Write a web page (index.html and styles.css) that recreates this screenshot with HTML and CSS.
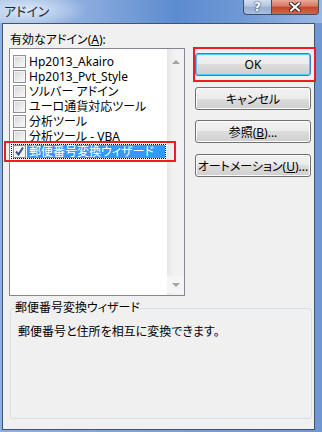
FILE: index.html
```html
<!DOCTYPE html>
<html lang="ja">
<head>
    <meta charset="UTF-8">
    <meta name="viewport" content="width=device-width, initial-scale=1.0">
    <title>アドイン</title>
    <link rel="stylesheet" href="styles.css">
</head>
<body>
    <div class="window">
        <div class="titlebar">
            <span class="title">アドイン</span>
            <div class="caption-buttons">
                <span class="cap-btn help">?</span>
                <span class="cap-btn close">
                    <svg width="12" height="10" viewBox="0 0 12 10">
                        <path d="M2 1.5 L10 8.5 M10 1.5 L2 8.5" stroke="#3a2a2a" stroke-width="4" stroke-linecap="square"/>
                        <path d="M2 1.5 L10 8.5 M10 1.5 L2 8.5" stroke="#ffffff" stroke-width="2" stroke-linecap="square"/>
                    </svg>
                </span>
            </div>
        </div>
        <div class="client">
            <div class="main">
                <div class="left">
                    <div class="label">有効なアドイン(<u>A</u>):</div>
                    <div class="listbox">
                        <ul class="items">
                            <li><span class="check"></span><span class="name">Hp2013_Akairo</span></li>
                            <li><span class="check"></span><span class="name">Hp2013_Pvt_Style</span></li>
                            <li><span class="check"></span><span class="name">ソルバー アドイン</span></li>
                            <li><span class="check"></span><span class="name">ユーロ通貨対応ツール</span></li>
                            <li><span class="check"></span><span class="name">分析ツール</span></li>
                            <li><span class="check"></span><span class="name">分析ツール - VBA</span></li>
                            <li class="selected">
                                <span class="check">
                                    <svg width="11" height="11" viewBox="0 0 11 11">
                                        <path d="M2 5.5 L4.5 8.5 L9 1.5" fill="none" stroke="#3d5287" stroke-width="2"/>
                                    </svg>
                                </span>
                                <span class="name">郵便番号変換ウィザード</span>
                            </li>
                        </ul>
                        <div class="scrollbar">
                            <span class="arrow up"></span>
                            <span class="track"></span>
                            <span class="arrow down"></span>
                        </div>
                        <div class="mark mark-item"></div>
                    </div>
                </div>
                <div class="buttons">
                    <div class="ok-wrap">
                        <button class="btn default">OK</button>
                        <div class="mark mark-ok"></div>
                    </div>
                    <button class="btn">キャンセル</button>
                    <button class="btn">参照(<u>B</u>)...</button>
                    <button class="btn last">オートメーション(<u>U</u>)...</button>
                </div>
            </div>
            <fieldset class="group">
                <legend>郵便番号変換ウィザード</legend>
                <p class="desc">郵便番号と住所を相互に変換できます。</p>
            </fieldset>
        </div>
    </div>
</body>
</html>
```

FILE: styles.css
```css
body {
    margin: 0;
    padding: 0;
    font-family: "Noto Sans", "Noto Sans CJK JP", sans-serif;
    font-size: 12px;
    font-feature-settings: "palt";
    color: #000;
}
.window {
    width: 322px;
    height: 432px;
    display: flex;
    flex-direction: column;
    background: linear-gradient(to right, #8fb0de 0%, #7aa0d6 50%, #6f97d2 100%);
    overflow: hidden;
}
.titlebar {
    height: 23px;
    flex: none;
    display: flex;
    align-items: flex-start;
    background:
        radial-gradient(ellipse 60px 18px at 28px 10px, rgba(230, 240, 252, 0.85), rgba(230, 240, 252, 0) 100%),
        linear-gradient(to right, #a9c2e6 0%, #86a8dc 30%, #5c8bd0 55%, #6f99d6 75%, #9ab8e3 100%);
}
.title {
    padding: 3px 0 0 4px;
    font-size: 13px;
    line-height: 16px;
    color: #1b2a3e;
}
.caption-buttons {
    margin-left: auto;
    margin-right: 3px;
    display: flex;
}
.cap-btn {
    height: 14px;
    display: flex;
    align-items: center;
    justify-content: center;
    border: 1px solid #3e4f69;
    border-top: none;
}
.help {
    width: 27px;
    border-right: none;
    border-radius: 0 0 0 4px;
    background: linear-gradient(#d2def0 0%, #b4c6e2 45%, #98afd3 50%, #a9bedf 100%);
    color: #fff;
    font-family: "DejaVu Sans", sans-serif;
    font-weight: bold;
    font-size: 12px;
    text-shadow: 0 0 2px #2c3a52, 0 0 1px #2c3a52;
}
.close {
    width: 46px;
    border-radius: 0 0 4px 0;
    background: linear-gradient(#e9a99b 0%, #d77563 45%, #c4452f 50%, #d2644d 100%);
}
.client {
    flex: 1;
    margin: 0 7px 2px 2px;
    border: 1px solid #3d5573;
    background: #f0f0f0;
}
.main {
    display: flex;
    padding-left: 6px;
}
.label {
    margin-top: 8px;
    line-height: 16px;
    padding-left: 1px;
}
.listbox {
    position: relative;
    width: 176px;
    height: 248px;
    box-sizing: border-box;
    border: 1px solid #828790;
    background: #fff;
    display: flex;
}
.items {
    list-style: none;
    margin: 0;
    padding: 5px 1px 0 1px;
    flex: 1;
}
.items li {
    height: 15px;
    display: flex;
    align-items: center;
    box-sizing: border-box;
    white-space: nowrap;
}
.check {
    width: 13px;
    height: 13px;
    box-sizing: border-box;
    margin-left: 2px;
    border: 1px solid #8e8f8f;
    background: linear-gradient(135deg, #d6d6d6 0%, #f0f0f0 70%, #fafafa 100%);
    box-shadow: inset 0 0 0 1px #f4f4f4;
    display: flex;
    align-items: center;
    justify-content: center;
    flex: none;
}
.name {
    margin-left: 3px;
    line-height: 15px;
}
.items li.selected {
    outline: 1px dotted #000;
    outline-offset: -1px;
}
.selected .check {
    background: #f4f4f4;
}
.selected .name {
    flex: 1;
    margin-left: 1px;
    padding-left: 2px;
    height: 13px;
    line-height: 13px;
    margin-right: 1px;
    background: #3399ff;
    color: #fff;
}
.scrollbar {
    width: 17px;
    flex: none;
    display: flex;
    flex-direction: column;
    align-items: center;
    background: linear-gradient(to right, #e6e6e6, #f2f2f2 40%, #f2f2f2);
}
.arrow {
    width: 17px;
    height: 17px;
    display: flex;
    align-items: center;
    justify-content: center;
}
.arrow.up {
    margin-top: 4px;
}
.arrow.down {
    margin-bottom: 2px;
    background: #f5f5f5;
}
.arrow::before {
    content: "";
    border-left: 4px solid transparent;
    border-right: 4px solid transparent;
}
.arrow.up::before {
    border-bottom: 4px solid #a3a3a3;
}
.arrow.down::before {
    border-top: 4px solid #a3a3a3;
}
.track {
    flex: 1;
}
.mark {
    position: absolute;
    border: 2px solid #ee1c25;
    box-sizing: border-box;
}
.mark-item {
    left: -6px;
    top: 92px;
    width: 172px;
    height: 21px;
}
.buttons {
    margin-left: 10px;
    padding-top: 29px;
    display: flex;
    flex-direction: column;
    gap: 10px;
}
.ok-wrap {
    position: relative;
    margin-bottom: 1px;
}
.mark-ok {
    left: -2px;
    top: -6px;
    width: 123px;
    height: 35px;
}
.btn {
    width: 116px;
    height: 23px;
    margin: 0;
    padding: 0;
    font-family: inherit;
    font-size: 12px;
    font-feature-settings: "palt";
    color: #000;
    border: 1px solid #707070;
    border-radius: 3px;
    background: linear-gradient(#f2f2f2 0%, #ebebeb 50%, #dddddd 50%, #cfcfcf 100%);
    box-shadow: inset 0 0 0 1px #fcfcfc;
    display: block;
}
.btn.default {
    border-color: #3c7fb1;
    box-shadow: inset 0 0 0 1px #48cff8;
}
.btn.last {
    margin-top: 1px;
}
.group {
    margin: 4px 0 0 7px;
    width: 302px;
    box-sizing: border-box;
    padding: 0 4px;
    border: 1px solid #d5dfe5;
    border-radius: 3px;
}
.group legend {
    padding: 0;
    line-height: 16px;
}
.desc {
    margin: 8px 0 0 3px;
    height: 94px;
    line-height: 16px;
}
```
